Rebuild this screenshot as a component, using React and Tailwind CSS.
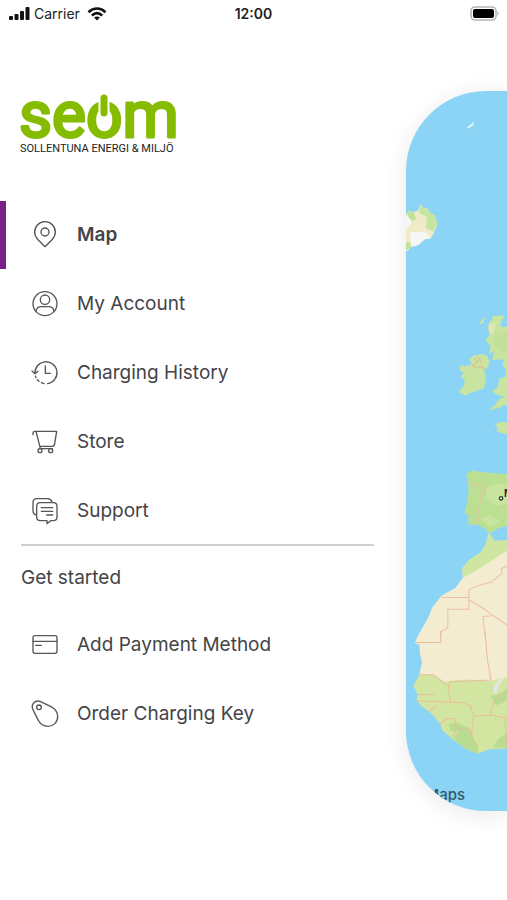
import React, { useState } from 'react';

const icons = {
  map: (
    <>
      <path d="M42 77 L21 56 C14 49 11 42 11 33 A31 31 0 0 1 73 33 C73 42 70 49 63 56 Z" />
      <circle cx="42" cy="33" r="12" />
    </>
  ),
  account: (
    <>
      <circle cx="42" cy="41" r="36" />
      <circle cx="42" cy="29" r="14" />
      <path d="M15 64 C16 53 24 50 32 50 H52 C60 50 68 53 69 64" />
    </>
  ),
  history: (
    <>
      <path d="M12 43 A33 33 0 1 1 50 74" />
      <path d="M39 74 L31 71 M24 67 L19 62 M15 56 L13 51" />
      <path d="M3 36 L12 44 L21 37" />
      <path d="M43 21 V43 H58" />
    </>
  ),
  store: (
    <>
      <path d="M6 20 V16 Q6 10 12 10 H77 L71 47 Q70 55 63 55 H27" />
      <path d="M15 10 L28 61 M25 62 H64" />
      <circle cx="27" cy="68" r="6" />
      <circle cx="59" cy="68" r="6" />
    </>
  ),
  support: (
    <>
      <path d="M16 54 Q6 51 6 41 V17 Q6 5 18 5 H50 Q59 5 63 14" />
      <path d="M28 17 H67 Q78 17 78 28 V60 Q78 71 67 71 H59 L48 80 V71 H28 Q17 71 17 60 V28 Q17 17 28 17 Z" />
      <path d="M31 32 H65 M31 43 H65 M47 54 H65" />
    </>
  ),
  payment: (
    <>
      <rect x="6" y="14" width="72" height="53" rx="6" />
      <path d="M6 31 H78 M14 43 H31" />
    </>
  ),
  key: (
    <>
      <path d="M5 27 C0 12 12 0 27 4 L60 20 C72 26 80 36 80 50 C80 67 67 79 51 79 C38 79 27 72 22 61 Z" />
      <circle cx="24" cy="22" r="7" />
    </>
  ),
};

const mainItems = [
  { id: 'map', label: 'Map' },
  { id: 'account', label: 'My Account' },
  { id: 'history', label: 'Charging History' },
  { id: 'store', label: 'Store' },
  { id: 'support', label: 'Support' },
];

const startItems = [
  { id: 'payment', label: 'Add Payment Method' },
  { id: 'key', label: 'Order Charging Key' },
];

const StatusBar = () => (
  <header className="grid grid-cols-3 items-center h-7 px-2 text-sm text-[#222]">
    <div className="flex items-center gap-1">
      <svg viewBox="0 0 22 14" className="w-[22px] h-[14px]" fill="#111">
        <rect x="1" y="9" width="4" height="4" rx="1" />
        <rect x="6.500" y="7" width="4" height="6" rx="1" />
        <rect x="12" y="4" width="4" height="9" rx="1" />
        <rect x="17.500" y="0" width="4" height="13" rx="1" />
      </svg>
      <span>Carrier</span>
      <svg viewBox="0 0 20 14" className="w-5 h-[14px] ml-[3px]" fill="none" stroke="#111" strokeWidth="2.600">
        <path d="M1.500 5.200 C6.500 0.300 13.500 0.300 18.500 5.200" />
        <path d="M4.800 8.500 C8 5.600 12 5.600 15.200 8.500" />
        <path d="M10 13.500 L7 10.600 C8.800 9.200 11.200 9.200 13 10.600 Z" fill="#111" stroke="none" />
      </svg>
    </div>
    <span className="text-center font-semibold">12:00</span>
    <svg viewBox="0 0 31 16" className="w-[31px] h-4 justify-self-end">
      <rect x="3" y="1" width="25" height="13" rx="4" fill="#fff" stroke="#b5b5b5" strokeWidth="1.600" />
      <rect x="5" y="3" width="21" height="9" rx="2" fill="#000" />
      <path d="M29.500 5 Q32 7.500 29.500 10 Z" fill="#b5b5b5" />
    </svg>
  </header>
);

const Logo = () => (
  <div className="ml-5 w-[158px]">
    <svg viewBox="0 0 158 50" className="w-full h-[50px] overflow-visible" role="img" aria-label="seom">
      <text x="-1" y="44" fontSize="64" fill="#86bc00" stroke="#86bc00" strokeWidth="3" strokeLinejoin="round" className="font-[Roboto,sans-serif]">seom</text>
      <path d="M84 2 V21" stroke="#fff" strokeWidth="11" strokeLinecap="round" />
      <path d="M84 5 V20" stroke="#86bc00" strokeWidth="7" strokeLinecap="round" />
    </svg>
    <p className="font-[Roboto,sans-serif] text-[11px] leading-3 whitespace-nowrap text-[#222]">SOLLENTUNA ENERGI &amp; MILJÖ</p>
  </div>
);

const NavItem = ({ item, active, onSelect }) => (
  <li>
    <button
      onClick={() => onSelect(item.id)}
      className={`flex items-center gap-[18px] w-full h-[68px] border-l-[6px] pl-[25px] text-left ${active ? 'border-[#7a1f87] font-semibold' : 'border-transparent'}`}
    >
      <svg viewBox="0 0 84 84" className="w-7 h-7 overflow-visible" fill="none" stroke="#55555a" strokeWidth="4" strokeLinecap="round" strokeLinejoin="round">
        {icons[item.id]}
      </svg>
      <span>{item.label}</span>
    </button>
  </li>
);

const MapPreview = () => (
  <svg viewBox="406 91 101 719" preserveAspectRatio="xMinYMid slice" className="w-full h-full">
    {/* Jan Mayen */}
    <path d="M467 128 L471 125 L474 122 L473 126 L468 129 Z" fill="#f4f8fa" />

    {/* Iceland */}
    <g transform="translate(390 80) scale(.33333)">
      <path d="M40 404 L52 404 L55 392 L70 398 L84 393 L90 375 L102 386 L113 386 L119 400 L134 406 L142 435 L130 463 L120 477 L104 479 L88 494 L75 500 L62 502 L55 512 L40 518 Z" fill="#efebc9" />
      <path d="M88 376 L102 386 L113 386 L119 400 L134 406 L142 435 L130 456 L108 446 L110 412 L88 400 Z" fill="#c5e5a0" />
      <path d="M54 393 L72 400 L78 418 L68 425 L52 408 Z M40 488 L64 488 L62 502 L40 518 Z" fill="#c0e398" />
      <path d="M40 406 L52 408 L66 428 L52 446 L40 446 Z M60 458 L104 456 L122 474 L104 479 L88 494 L75 500 L62 496 Z" fill="#f6f6f4" />
    </g>

    {/* Ireland, Great Britain and Brittany */}
    <g transform="translate(390 290) scale(.33333)" fill="#c8e4a0">
      <path d="M208 226 L225 228 L244 222 L238 206 L250 196 L278 192 L291 198 L299 216 L292 232 L282 240 L287 268 L281 294 L240 308 L224 316 L205 305 L220 288 L224 270 L212 260 L220 248 L209 240 Z" />
      <path d="M268 100 L276 86 L284 80 L280 96 L272 104 Z" />
      <path d="M297 96 L306 90 L306 78 L343 77 L328 104 L336 112 L360 108 L360 345 L340 344 L325 354 L295 359 L316 342 L326 326 L345 319 L322 314 L304 304 L322 292 L327 264 L346 260 L345 236 L336 226 L342 208 L305 209 L312 180 L296 194 L301 164 L285 152 L299 132 L291 116 Z" />
      <path d="M312 402 L330 395 L360 396 L360 432 L340 430 L318 422 L322 410 Z" />
      <path d="M297 102 L318 98 L308 132 L296 128 Z" fill="#dfe8b7" />
      <path d="M312 140 L360 120 L360 190 L330 184 L310 168 Z" fill="#bfe198" />
      <path d="M250 204 L262 214 L248 226 L258 234 L274 230 L284 238 M262 198 L272 218" fill="none" stroke="#e3b992" strokeWidth="3" />
    </g>

    {/* Iberia and North Africa */}
    <g transform="translate(390 460) scale(.33333)">
      <path d="M228 42 L248 29 L268 34 L360 42 L360 190 L322 204 L298 218 L282 202 L262 192 L235 192 L234 160 L222 156 L229 132 L234 108 L235 74 Z" fill="#bce091" />
      <path d="M290 80 L330 68 L360 80 L360 126 L318 136 L286 112 Z M270 172 L300 164 L330 182 L300 200 Z" fill="#c8e49f" />
      <path d="M296 216 L312 240 L360 240 L360 550 L84 550 L75 545 L86 520 L116 466 L126 440 L154 404 L196 380 L218 350 L216 322 L236 298 L272 274 L286 250 Z" fill="#f4ecd0" />
      <path d="M296 216 L312 240 L360 238 L360 262 L300 302 L262 326 L218 350 L216 322 L236 298 L272 274 L286 250 Z" fill="#cfe6a2" />
      <g fill="none" stroke="#ecbfa8" strokeWidth="3">
        <path d="M236 72 L274 72 L284 84 L272 102 L272 128 L262 144 L268 166 L260 192" />
        <path d="M360 310 L334 322 L334 338 L302 364 L262 374 L236 386 L236 444 L173 444 L173 500 L152 512 L152 544" />
        <path d="M154 409 L236 409 M236 416 L276 440 L306 462 L360 498 M306 464 L278 466 L286 544" />
      </g>
      <circle cx="332" cy="113" r="5" fill="#fff" stroke="#333" strokeWidth="4" />
      <text x="341" y="109" fontSize="29" fontWeight="600" fill="#222">M</text>
    </g>

    {/* West Africa */}
    <g transform="translate(390 630) scale(.33333)">
      <path d="M78 20 L88 38 L90 70 L96 92 L88 130 L164 152 L360 150 L360 20 Z" fill="#f4ecd0" />
      <path d="M88 130 L130 130 L164 152 L178 148 L230 144 L300 150 L330 140 L360 140 L360 350 L300 352 L260 366 L222 348 L184 320 L156 296 L150 276 L124 246 L92 222 L80 206 L82 186 L70 164 Z" fill="#d3e6a1" />
      <path d="M176 278 L200 272 L236 290 L250 318 L262 350 L260 366 L222 348 L188 320 L204 300 L180 298 Z M306 346 L326 320 L360 298 L360 350 Z M300 194 L330 186 L360 164 L360 200 L318 222 Z" fill="#b8dc90" />
      <path d="M310 186 L312 162 L332 136 L338 142 L322 168 L320 186 Z" fill="#e4e6e2" />
      <g fill="none" stroke="#e9bc9c" strokeWidth="3">
        <path d="M78 34 L152 34 L152 0 M284 0 L292 90 L302 146 L178 152 L174 172 L182 212 L218 214 L240 222 L250 254 L300 250 L360 262" />
        <path d="M88 130 L130 130 L170 162 M84 190 L134 188 M80 208 L182 212 M118 240 L138 222 M150 276 L170 260 L192 262 L202 290 L184 318 M204 290 L240 294 L244 324 L262 340 L262 366 M250 254 L244 310 M300 250 L312 210 L334 190 L360 178 M344 262 L350 350" />
      </g>
    </g>
  </svg>
);

export default function App() {
  const [selected, setSelected] = useState('map');

  return (
    <div className="min-h-screen overflow-hidden bg-white font-[Inter,sans-serif]">
      <StatusBar />
      <div className="flex">
        <aside className="w-4/5 shrink-0 pt-[65px]">
          <Logo />
          <nav className="mt-[46px] text-[19px] text-[#444448]">
            <ul className="flex flex-col gap-px">
              {mainItems.map(item => (
                <NavItem key={item.id} item={item} active={selected === item.id} onSelect={setSelected} />
              ))}
            </ul>
            <hr className="ml-[21px] mr-8 -mt-px border-t-2 border-[#cfcfcf]" />
            <h2 className="flex items-center h-[65px] ml-[21px]">Get started</h2>
            <ul className="flex flex-col gap-px">
              {startItems.map(item => (
                <NavItem key={item.id} item={item} active={selected === item.id} onSelect={setSelected} />
              ))}
            </ul>
          </nav>
        </aside>
        <main className="relative flex-1 h-[80vh] mt-[63px] overflow-hidden rounded-l-[80px] bg-[#8bd4f6] shadow-[0_4px_24px_rgba(0,0,0,0.09)]">
          <MapPreview />
          <span className="absolute bottom-1.5 left-5 text-[15px] leading-5 font-medium text-[#33586b]">Maps</span>
        </main>
      </div>
    </div>
  );
}
